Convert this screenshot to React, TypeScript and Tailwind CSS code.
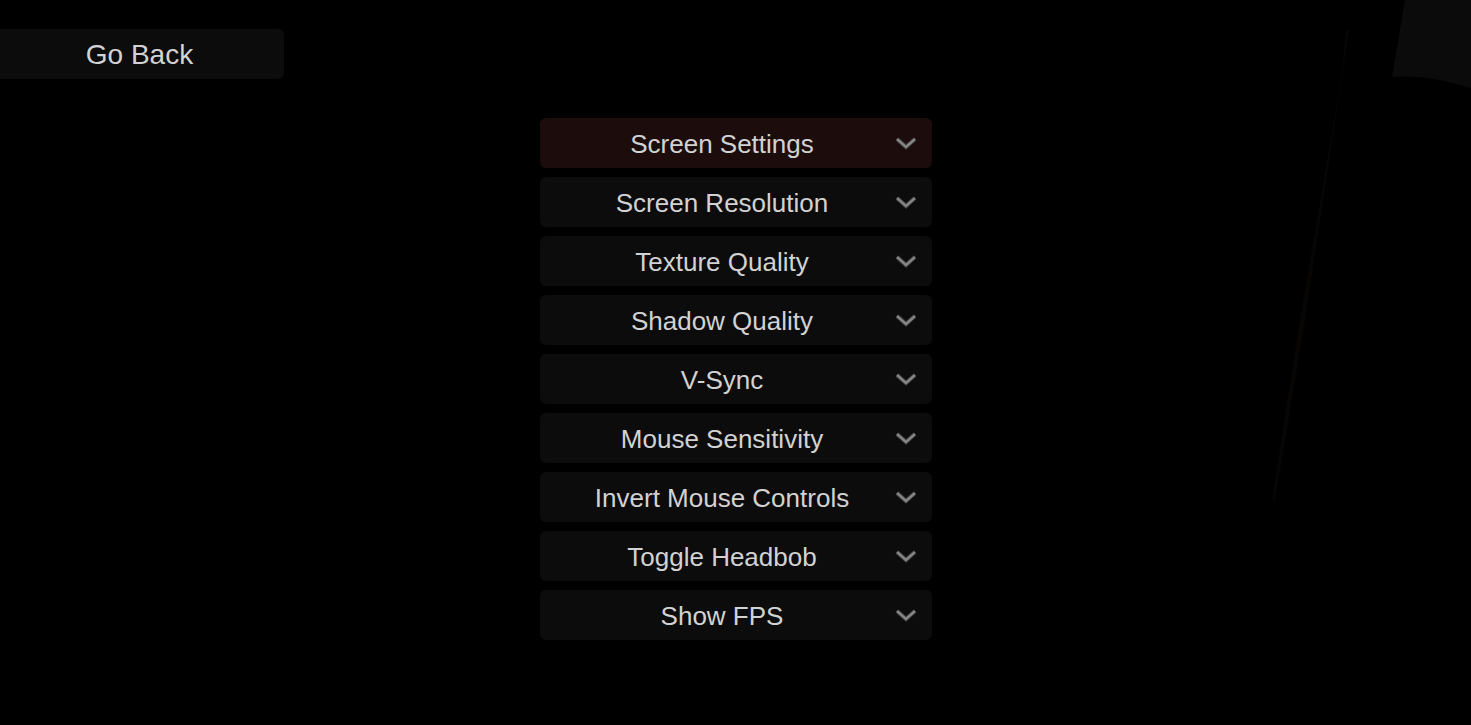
import React, { useState } from 'react';

const settings = [
  'Screen Settings',
  'Screen Resolution',
  'Texture Quality',
  'Shadow Quality',
  'V-Sync',
  'Mouse Sensitivity',
  'Invert Mouse Controls',
  'Toggle Headbob',
  'Show FPS',
];

function Chevron() {
  return (
    <svg width="22" height="14" viewBox="0 0 22 14" className="shrink-0">
      <path d="M3 3 L12 11 L21 3" fill="none" stroke="#333" strokeWidth="4.5" />
      <path d="M3 3 L12 11 L21 3" fill="none" stroke="#858585" strokeWidth="2.5" />
    </svg>
  );
}

export default function App() {
  const [active, setActive] = useState(0);

  return (
    <div className="relative h-[725px] w-full overflow-hidden bg-black font-['Liberation_Sans',Arial,sans-serif] text-[#d2d2d2]">
      {/* faint scenery in the dark */}
      <svg className="absolute inset-0 pointer-events-none" width="1471" height="725" viewBox="0 0 1471 725">
        <path d="M1405 0 L1471 0 L1471 88 Q1428 74 1392 77 Z" fill="#0b0b0b" />
        <path d="M1346 30 L1341 80 L1300 320 L1272 500 L1275 500 L1305 320 L1349 30 Z" fill="#070605" />
      </svg>

      <div className="relative pt-[29px]">
        <button className="flex h-[50px] w-[284px] items-center justify-center rounded-r-md bg-[#0c0c0c] pr-[5px] pt-[2px] text-[28px]">
          Go Back
        </button>
      </div>

      <div className="relative mt-[39px] flex flex-col items-center gap-[9px] pl-[1px]">
        {settings.map((label, i) => (
          <button
            key={label}
            onClick={() => setActive(i)}
            className={`flex h-[50px] w-[392px] items-center rounded-md pl-[10px] pr-[16px] text-[26px] ${
              active === i ? 'bg-[#1c0d0c]' : 'bg-[#0c0c0c]'
            }`}
          >
            <span className="flex-1 pt-[2px] text-center">{label}</span>
            <Chevron />
          </button>
        ))}
      </div>
    </div>
  );
}
